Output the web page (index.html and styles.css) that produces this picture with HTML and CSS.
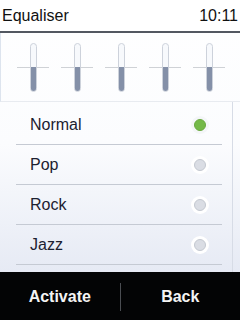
FILE: index.html
```html
<!DOCTYPE html>
<html lang="en">
<head>
    <meta charset="UTF-8">
    <meta name="viewport" content="width=device-width, initial-scale=1.0">
    <title>Equaliser</title>
    <link rel="stylesheet" href="styles.css">
</head>
<body>
    <div class="screen">
        <div class="title-bar">
            <span class="title">Equaliser</span>
            <span class="clock">10:11</span>
        </div>

        <div class="bands">
            <div class="band"><div class="bar"><div class="fill"></div></div></div>
            <div class="band"><div class="bar"><div class="fill"></div></div></div>
            <div class="band"><div class="bar"><div class="fill"></div></div></div>
            <div class="band"><div class="bar"><div class="fill"></div></div></div>
            <div class="band"><div class="bar"><div class="fill"></div></div></div>
        </div>

        <div class="presets">
            <div class="preset">
                <span>Normal</span>
                <span class="radio selected"></span>
            </div>
            <div class="preset">
                <span>Pop</span>
                <span class="radio"></span>
            </div>
            <div class="preset">
                <span>Rock</span>
                <span class="radio"></span>
            </div>
            <div class="preset">
                <span>Jazz</span>
                <span class="radio"></span>
            </div>
        </div>

        <div class="softkeys">
            <span class="softkey">Activate</span>
            <span class="divider"></span>
            <span class="softkey">Back</span>
        </div>
    </div>
</body>
</html>
```

FILE: styles.css
```css
body {
    margin: 0;
    font-family: "Liberation Sans", Arial, sans-serif;
}
.screen {
    width: 240px;
    height: 320px;
    display: flex;
    flex-direction: column;
    background: linear-gradient(#ffffff 0%, #fbfcfe 45%, #e6eaf4 85%);
    overflow: hidden;
}
.title-bar {
    height: 31px;
    display: flex;
    justify-content: space-between;
    align-items: center;
    padding: 0 2px 0 2px;
    border-bottom: 2px solid #535861;
    background-color: #ffffff;
    font-size: 16px;
    color: #111;
}
.bands {
    height: 69px;
    display: flex;
    padding: 10px 0 0 10px;
    box-sizing: border-box;
    border-bottom: 1px solid #e8ebf0;
    border-left: 1px solid #dde4ee;
}
.band {
    width: 44px;
    display: flex;
    justify-content: center;
    background: linear-gradient(transparent 24px, #cfd2d6 24px, #cfd2d6 25px, transparent 25px) no-repeat 6px 0 / 32px 100%;
}
.bar {
    width: 5px;
    height: 47px;
    border: 1px solid #cdd2db;
    border-radius: 4px;
    background-color: #f7f9fc;
    display: flex;
    flex-direction: column;
    justify-content: flex-end;
    overflow: hidden;
}
.fill {
    height: 24px;
    background-color: #8490a8;
}
.presets {
    height: 170px;
    padding: 4px 0 0 16px;
    box-sizing: border-box;
    border-right: 1px solid #d7dce6;
    width: 233px;
}
.preset {
    height: 39px;
    width: 206px;
    display: flex;
    justify-content: space-between;
    align-items: center;
    padding: 0 16px 0 14px;
    box-sizing: border-box;
    border-bottom: 1px solid #c5cad3;
    font-size: 16px;
    color: #1c2130;
}
.preset + .preset {
    height: 40px;
}
.radio {
    width: 10px;
    height: 10px;
    border-radius: 50%;
    background-color: #dadde4;
    border: 1px solid #c3c8d0;
    box-shadow: 0 0 0 3px #ffffff;
}
.radio.selected {
    background-color: #74b948;
    border-color: #6aa940;
    box-shadow: 0 0 0 3px #f4f6f8;
}
.softkeys {
    flex: 1;
    display: flex;
    align-items: center;
    padding-top: 2px;
    background-color: #030405;
    color: #f4f4f4;
    font-size: 16px;
    font-weight: bold;
}
.softkey {
    flex: 1;
    text-align: center;
}
.divider {
    width: 1px;
    height: 28px;
    background-color: #4a4d52;
}
```
